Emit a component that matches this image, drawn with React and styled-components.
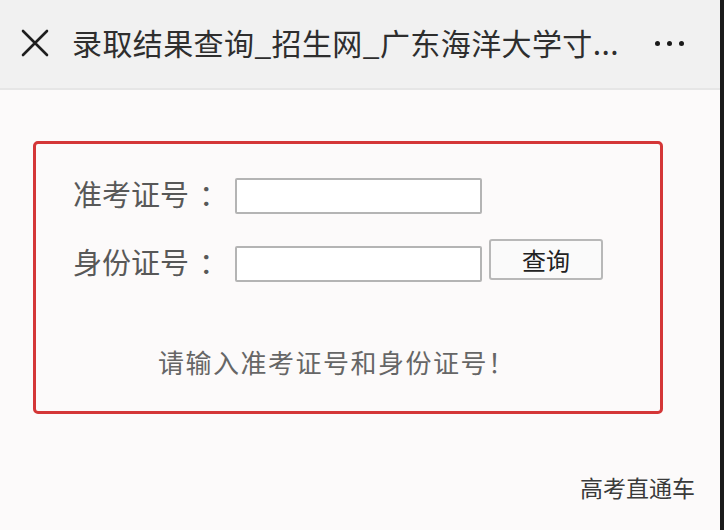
import React from 'react';
import styled, { createGlobalStyle } from 'styled-components';

const GlobalStyle = createGlobalStyle`
    html, body {
        margin: 0;
        padding: 0;
        background: #fcfafa;
    }
    body {
        font-family: "Noto Sans CJK SC", "Noto Sans", sans-serif;
    }
`;

function App() {
    return (
        <>
            <GlobalStyle />
            <Frame>
                <Screen>
                    <TopBar>
                        <CloseIcon width="28" height="28" viewBox="0 0 28 28">
                            <path d="M2 2 L26 26 M26 2 L2 26" stroke="#1f1f1f" strokeWidth="2.6" strokeLinecap="round" fill="none" />
                        </CloseIcon>
                        <Title>录取结果查询_招生网_广东海洋大学寸...</Title>
                        <MoreDots>
                            <Dot />
                            <Dot />
                            <Dot />
                        </MoreDots>
                    </TopBar>
                    <Content>
                        <QueryBox>
                            <FormRow>
                                <Label>准考证号<Colon>：</Colon></Label>
                                <TextInput type="text" />
                            </FormRow>
                            <FormRow>
                                <Label>身份证号<Colon>：</Colon></Label>
                                <TextInput type="text" />
                                <QueryButton>查询</QueryButton>
                            </FormRow>
                            <Message>请输入准考证号和身份证号！</Message>
                        </QueryBox>
                        <Watermark>高考直通车</Watermark>
                    </Content>
                </Screen>
                <Edge />
            </Frame>
        </>
    );
}

export default App;

const Frame = styled.div`
    display: flex;
    width: 724px;
    height: 530px;
    overflow: hidden;
`;

const Screen = styled.div`
    flex: 1;
    display: flex;
    flex-direction: column;
    background: #fcfafa;
`;

const Edge = styled.div`
    width: 4px;
    background: #1a1a1a;
`;

const TopBar = styled.div`
    height: 90px;
    box-sizing: border-box;
    display: flex;
    align-items: center;
    padding-left: 21px;
    background: #f1f1f1;
    border-bottom: 2px solid #e6e6e6;
`;

const CloseIcon = styled.svg`
    flex-shrink: 0;
    margin-top: -2px;
`;

const Title = styled.div`
    margin-left: 23px;
    font-size: 30px;
    color: #2e2e2e;
    white-space: nowrap;
    letter-spacing: 0.4px;
    margin-top: -4px;
`;

const MoreDots = styled.div`
    display: flex;
    gap: 7px;
    margin-left: auto;
    margin-right: 36px;
    margin-top: -2px;
`;

const Dot = styled.span`
    width: 5px;
    height: 5px;
    border-radius: 50%;
    background: #1a1a1a;
`;

const Content = styled.div`
    flex: 1;
    display: flex;
    flex-direction: column;
    padding: 51px 0 0 33px;
`;

const QueryBox = styled.div`
    width: 630px;
    height: 273px;
    box-sizing: border-box;
    border: 3px solid #d43637;
    border-radius: 5px;
    padding: 33px 0 0 37px;
    display: flex;
    flex-direction: column;
    gap: 32px;
`;

const FormRow = styled.div`
    display: flex;
    align-items: center;
    height: 36px;
`;

const Label = styled.span`
    width: 162px;
    font-size: 29px;
    color: #585858;
    margin-top: -4px;
    white-space: nowrap;
`;

const Colon = styled.span`
    padding-left: 10px;
`;

const TextInput = styled.input`
    width: 247px;
    height: 36px;
    box-sizing: border-box;
    border: 2px solid #b4b4b4;
    border-radius: 2px;
    background: #fff;
    outline: none;
    margin-top: 2px;
`;

const QueryButton = styled.button`
    width: 114px;
    height: 41px;
    margin-left: 7px;
    margin-top: -8px;
    box-sizing: border-box;
    border: 2px solid #b8b8b8;
    border-radius: 3px;
    background: #fafafa;
    font-family: "Noto Sans CJK SC", sans-serif;
    font-size: 24px;
    color: #222;
    padding: 0;
`;

const Message = styled.div`
    margin-top: 30px;
    padding-left: 85px;
    font-size: 26px;
    color: #666;
    letter-spacing: 1.5px;
`;

const Watermark = styled.div`
    align-self: flex-end;
    margin-top: 56px;
    margin-right: 25px;
    font-size: 23px;
    color: #3a3a3a;
    text-shadow: 0 0 2px #fff;
`;
